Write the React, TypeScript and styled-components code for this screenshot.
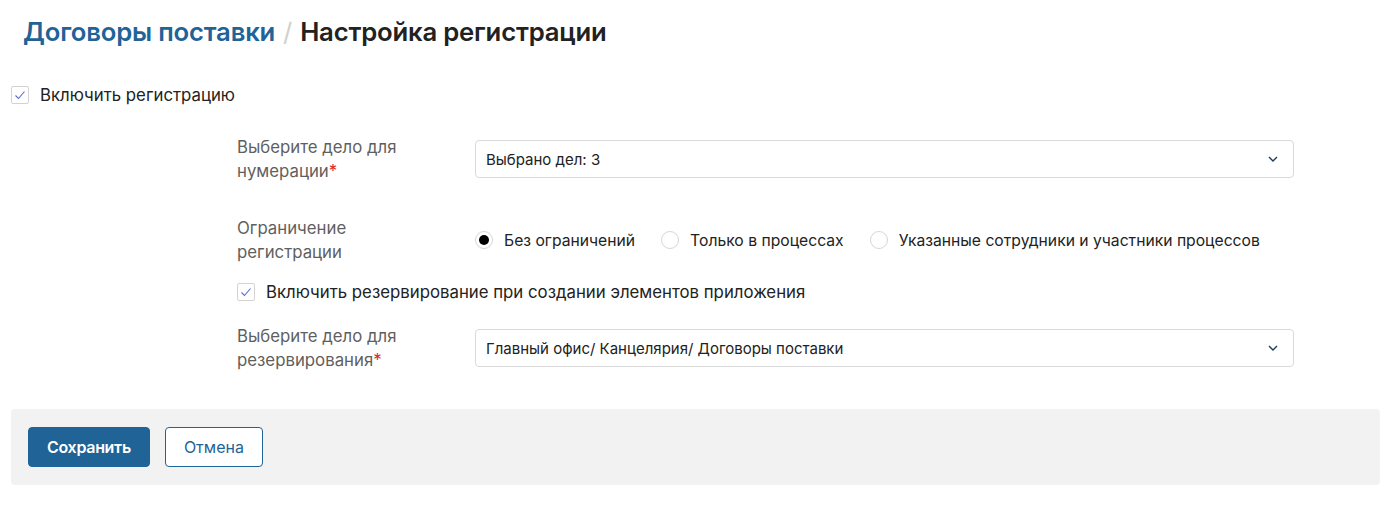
import React from 'react';
import styled, { createGlobalStyle } from 'styled-components';

const BLUE = '#1f6397';
const FONT = 'Inter, Roboto, "Noto Sans", sans-serif';

const GlobalStyle = createGlobalStyle`
    html, body {
        margin: 0;
        padding: 0;
        background: #fff;
    }
    body {
        font-family: ${FONT};
        color: #222;
    }
`;

const Page = styled.div`
    width: 1390px;
    padding: 14px 10px 0 11px;
    box-sizing: border-box;
`;

const Breadcrumbs = styled.h1`
    margin: 0 0 0 12px;
    font-size: 25.7px;
    font-weight: 600;
    line-height: 36px;
    letter-spacing: -0.2px;
    display: flex;
    align-items: center;
    gap: 8px;

    & .link {
        color: ${BLUE};
    }
    & .sep {
        color: #d0d0d0;
        font-weight: 400;
    }
    & .current {
        color: #222;
    }
`;

const CheckRow = styled.label<{ $top: number }>`
    display: flex;
    align-items: center;
    gap: 11px;
    margin-top: ${(p) => p.$top}px;
    font-size: 16.8px;
    color: #222;
    height: 24px;
`;

const Box = styled.span`
    width: 18px;
    height: 18px;
    box-sizing: border-box;
    border: 1px solid #d3d3d3;
    border-radius: 2px;
    display: flex;
    align-items: center;
    justify-content: center;
    background: #fff;
    flex-shrink: 0;
`;

const Form = styled.div`
    margin-left: 226px;
    margin-right: 86px;
    display: flex;
    flex-direction: column;
`;

const FieldRow = styled.div<{ $top: number }>`
    display: grid;
    grid-template-columns: 238px 1fr;
    align-items: center;
    margin-top: ${(p) => p.$top}px;
`;

const Label = styled.div`
    font-size: 16.8px;
    line-height: 24px;
    color: #5f5f5f;

    & .req {
        color: #e0262f;
    }
`;

const Select = styled.div`
    height: 38px;
    box-sizing: border-box;
    border: 1px solid #d9d9d9;
    border-radius: 4px;
    display: flex;
    align-items: center;
    justify-content: space-between;
    padding: 0 14px 0 10px;
    font-size: 15px;
    color: #222;
`;

const Radios = styled.div`
    display: flex;
    align-items: center;
    gap: 26px;
`;

const RadioOption = styled.label`
    display: flex;
    align-items: center;
    gap: 11px;
    font-size: 15.7px;
    color: #222;
`;

const RadioCircle = styled.span<{ $checked?: boolean }>`
    width: 18px;
    height: 18px;
    box-sizing: border-box;
    border-radius: 50%;
    border: 1px solid #d6d6d6;
    background: #fff;
    display: flex;
    align-items: center;
    justify-content: center;

    &::after {
        content: '';
        width: 10px;
        height: 10px;
        border-radius: 50%;
        background: ${(p) => (p.$checked ? '#000' : 'transparent')};
    }
`;

const Footer = styled.div`
    margin-top: 37px;
    height: 76px;
    background: #f2f2f2;
    border-radius: 4px;
    display: flex;
    align-items: center;
    gap: 15px;
    padding: 0 17px;
`;

const Button = styled.button<{ $primary?: boolean }>`
    height: 40px;
    box-sizing: border-box;
    border-radius: 4px;
    font-family: ${FONT};
    font-size: 16px;
    font-weight: ${(p) => (p.$primary ? 600 : 400)};
    letter-spacing: ${(p) => (p.$primary ? '-0.3px' : '0')};
    padding: 0 18px;
    cursor: pointer;
    border: 1px solid ${BLUE};
    background: ${(p) => (p.$primary ? BLUE : '#fff')};
    color: ${(p) => (p.$primary ? '#fff' : BLUE)};
`;

const Check = () => (
    <svg width="14" height="14" viewBox="0 0 14 14" fill="none">
        <path d="M2.5 7.5 L5.5 10.5 L11.5 3.5" stroke="#5b6cc4" strokeWidth="1.1" />
    </svg>
);

const Chevron = () => (
    <svg width="12" height="8" viewBox="0 0 12 8" fill="none">
        <path d="M2 2 L6 6 L10 2" stroke="#1e3a5a" strokeWidth="1.4" />
    </svg>
);

const restrictions = [
    { label: 'Без ограничений', checked: true },
    { label: 'Только в процессах', checked: false },
    { label: 'Указанные сотрудники и участники процессов', checked: false }
];

export default function App() {
    return (
        <Page>
            <GlobalStyle />
            <Breadcrumbs>
                <span className="link">Договоры поставки</span>
                <span className="sep">/</span>
                <span className="current">Настройка регистрации</span>
            </Breadcrumbs>

            <CheckRow $top={33}>
                <Box>
                    <Check />
                </Box>
                Включить регистрацию
            </CheckRow>

            <Form>
                <FieldRow $top={28}>
                    <Label>
                        Выберите дело для
                        <br />
                        нумерации<span className="req">*</span>
                    </Label>
                    <Select>
                        Выбрано дел: 3
                        <Chevron />
                    </Select>
                </FieldRow>

                <FieldRow $top={33}>
                    <Label>
                        Ограничение
                        <br />
                        регистрации
                    </Label>
                    <Radios>
                        {restrictions.map((r, i) => (
                            <RadioOption key={i}>
                                <RadioCircle $checked={r.checked} />
                                {r.label}
                            </RadioOption>
                        ))}
                    </Radios>
                </FieldRow>

                <CheckRow $top={16}>
                    <Box>
                        <Check />
                    </Box>
                    Включить резервирование при создании элементов приложения
                </CheckRow>

                <FieldRow $top={20}>
                    <Label>
                        Выберите дело для
                        <br />
                        резервирования<span className="req">*</span>
                    </Label>
                    <Select>
                        Главный офис/ Канцелярия/ Договоры поставки
                        <Chevron />
                    </Select>
                </FieldRow>
            </Form>

            <Footer>
                <Button $primary>Сохранить</Button>
                <Button>Отмена</Button>
            </Footer>
        </Page>
    );
}
